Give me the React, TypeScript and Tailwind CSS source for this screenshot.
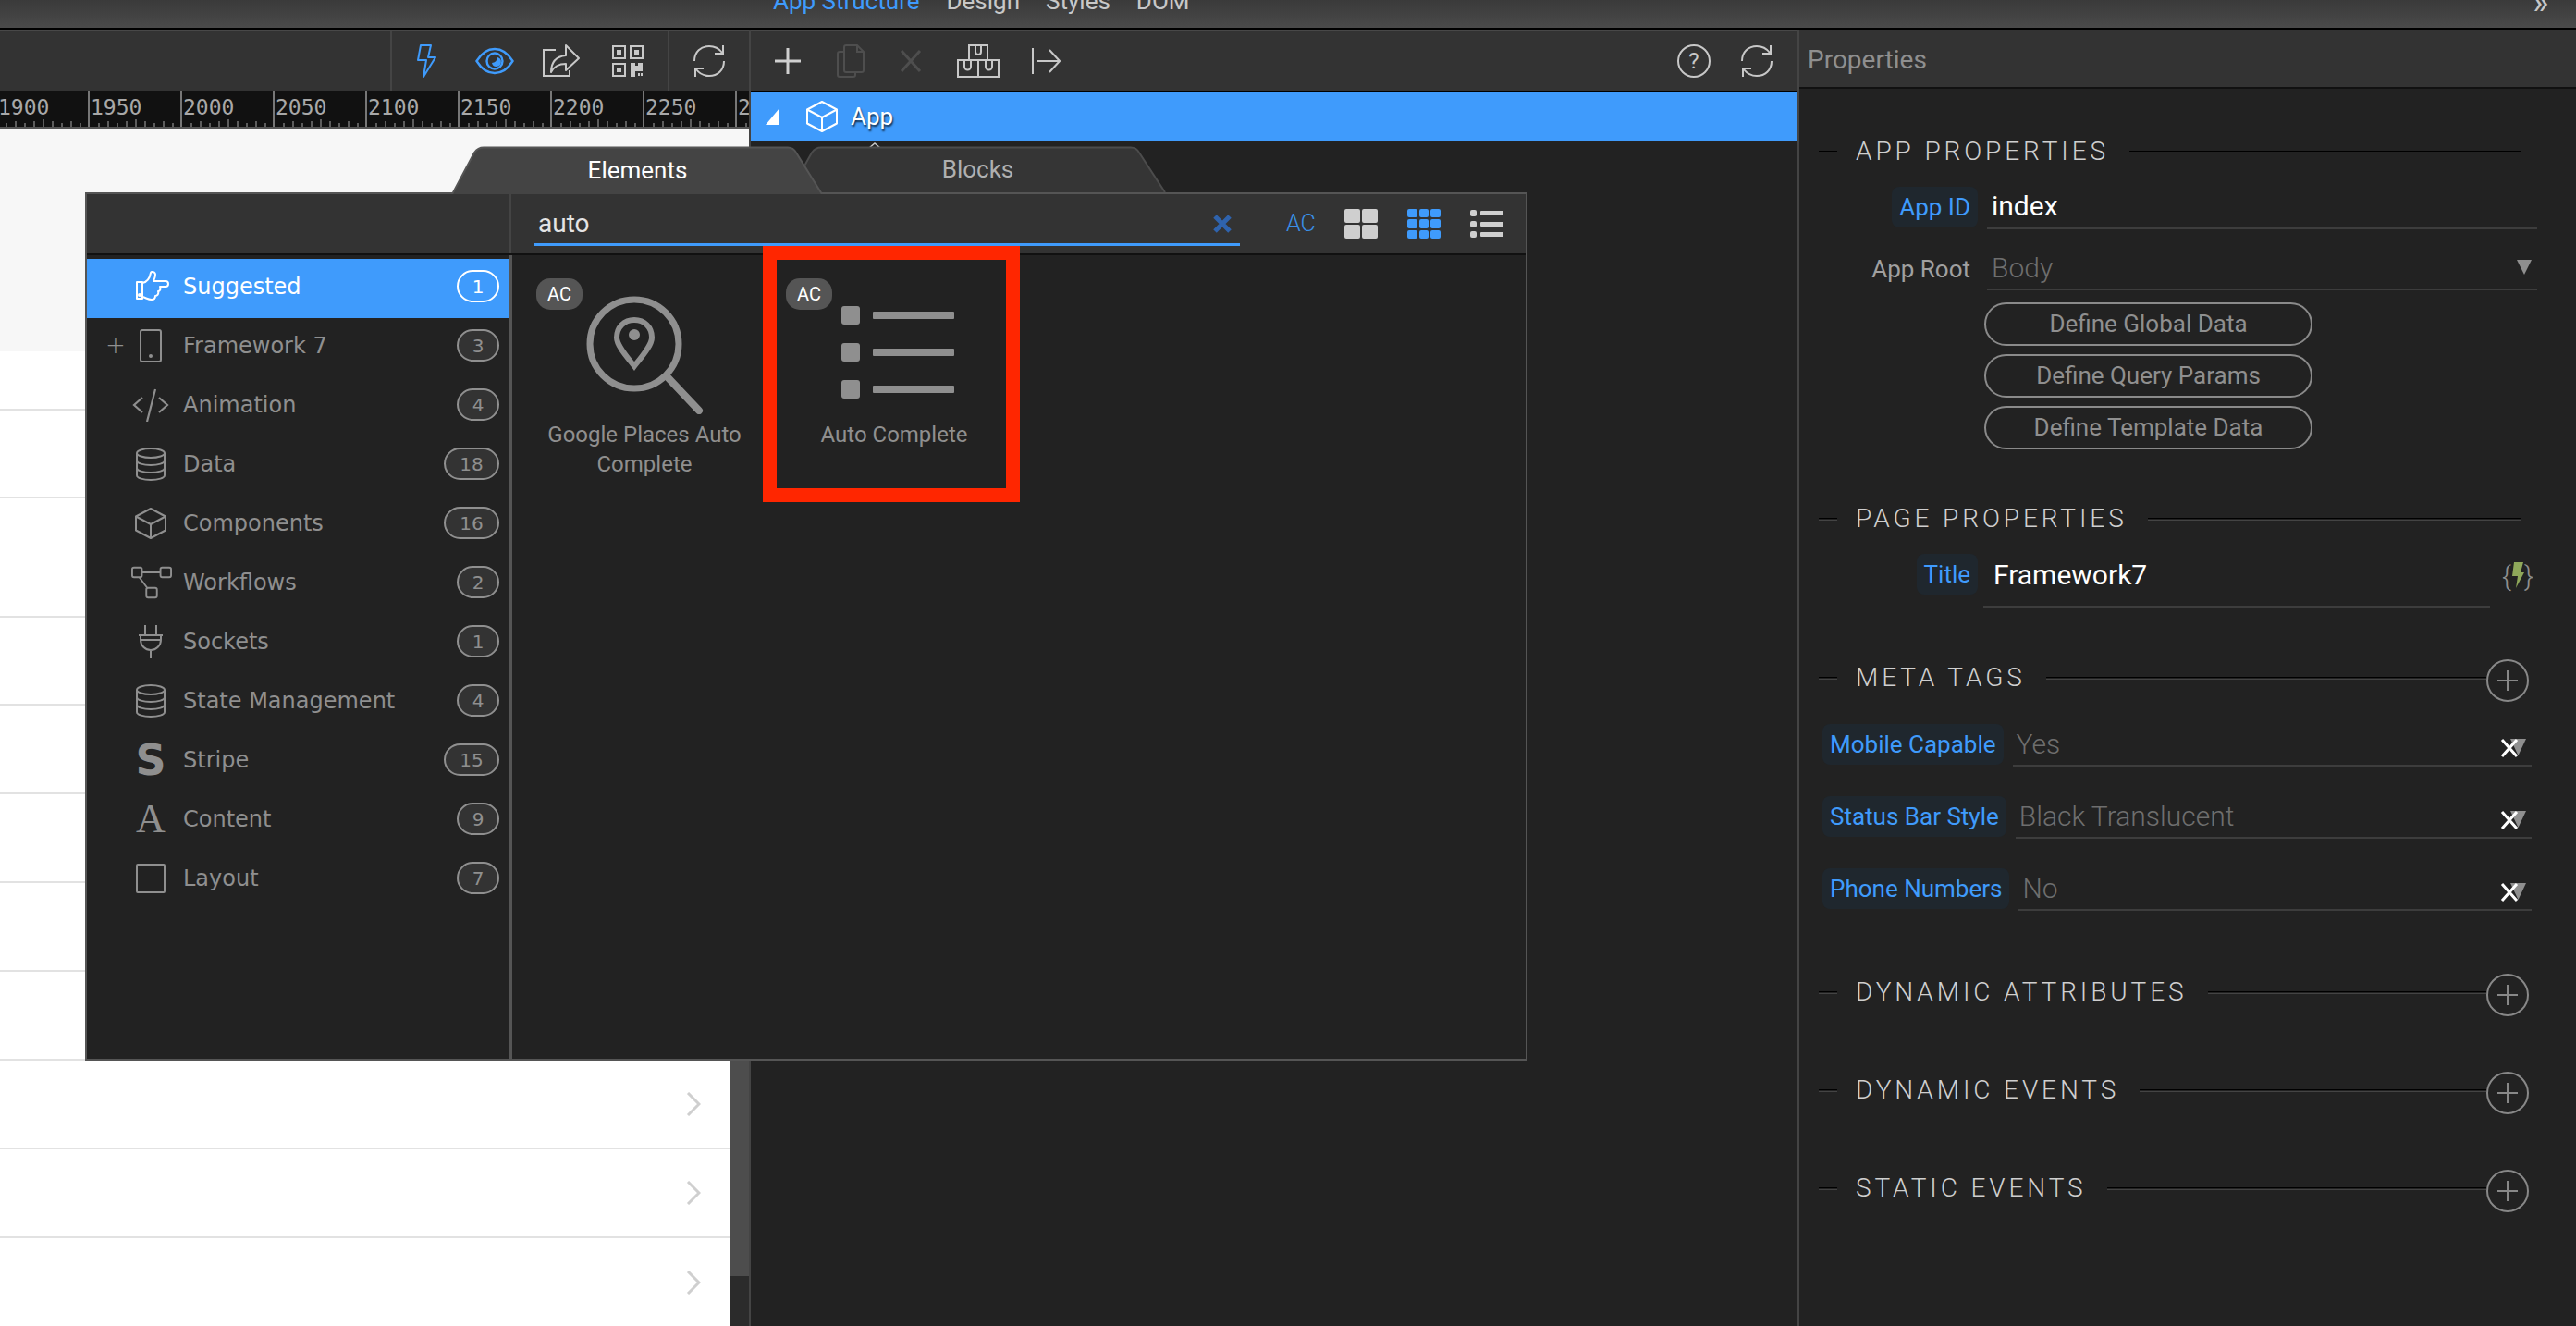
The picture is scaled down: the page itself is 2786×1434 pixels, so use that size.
import React from 'react';

// ---- toolbar icons ----
const Bolt = () => (
  <svg width="26" height="36" viewBox="0 0 26 36" fill="none" stroke="#3f9bfc" strokeWidth="2">
    <path d="M5 1h11l-3 13h8L8 35l3-18H2z" strokeLinejoin="round" />
  </svg>
);
const Eye = () => (
  <svg width="42" height="30" viewBox="0 0 42 30" fill="none" stroke="#3f9bfc" strokeWidth="2.4">
    <path d="M1.500 15C7 6 13 2 21 2s14 4 19.500 13C35 24 29 28 21 28S7 24 1.500 15z" />
    <circle cx="21" cy="15" r="8.500" />
    <path d="M24 11a5 5 0 1 1-6 6a6 6 0 0 0 6-6z" fill="#3f9bfc" stroke="none" />
  </svg>
);
const Share = () => (
  <svg width="42" height="36" viewBox="0 0 42 36" fill="none" stroke="#c8c8c8" strokeWidth="2">
    <path d="M15 6H2v28h28v-6" />
    <path d="M26 1l14 14-14 13v-7c-8 0-13 3-16 9 0-11 6-17 16-18z" strokeLinejoin="round" />
  </svg>
);
const Qr = () => (
  <svg width="34" height="34" viewBox="0 0 34 34" fill="none" stroke="#c8c8c8" strokeWidth="2">
    <rect x="1" y="1" width="13" height="13" />
    <rect x="20" y="1" width="13" height="13" />
    <rect x="1" y="20" width="13" height="13" />
    <g fill="#c8c8c8" stroke="none">
      <rect x="5" y="5" width="5" height="5" />
      <rect x="24" y="5" width="5" height="5" />
      <rect x="5" y="24" width="5" height="5" />
      <path d="M20 19h5v3h3v-3h5v9h-8v6h-5z" />
      <rect x="28" y="30" width="2" height="3" />
      <rect x="31" y="30" width="2" height="3" />
    </g>
  </svg>
);
const Refresh = () => (
  <svg width="38" height="36" viewBox="0 0 38 36" fill="none" stroke="#c8c8c8" strokeWidth="2">
    <path d="M3 18C3 8 10 2 19 2c6 0 11 3 14 7" />
    <path d="M35 18c0 10-7 16-16 16-6 0-11-3-14-7" />
    <path d="M34 1v9H25" />
    <path d="M4 35v-9h9" />
  </svg>
);
const Plus = () => (
  <svg width="28" height="28" viewBox="0 0 28 28" stroke="#d0d0d0" strokeWidth="3">
    <path d="M14 0v28M0 14h28" />
  </svg>
);
const Copy = () => (
  <svg width="30" height="36" viewBox="0 0 30 36" fill="none" stroke="#4e4e4e" strokeWidth="2">
    <path d="M10 1h12l7 7v20a2 2 0 0 1-2 2H10a2 2 0 0 1-2-2V3a2 2 0 0 1 2-2z" />
    <path d="M8 8H3a2 2 0 0 0-2 2v23a2 2 0 0 0 2 2h15a2 2 0 0 0 2-2v-3" />
    <path d="M22 1v7h7" />
  </svg>
);
const CrossDim = () => (
  <svg width="24" height="24" viewBox="0 0 24 24" stroke="#4e4e4e" strokeWidth="3">
    <path d="M2 1l20 22M22 1L2 23" />
  </svg>
);
const Boxes = () => (
  <svg width="46" height="36" viewBox="0 0 46 36" fill="none" stroke="#c8c8c8" strokeWidth="2">
    <rect x="13" y="1" width="20" height="16" />
    <path d="M20 1v7a3 3 0 0 0 6 0V1" />
    <rect x="1" y="17" width="22" height="18" />
    <rect x="23" y="17" width="22" height="18" />
    <path d="M8 17v7a3 3 0 0 0 7 0v-7M31 17v7a3 3 0 0 0 7 0v-7" />
  </svg>
);
const MoveTo = () => (
  <svg width="32" height="28" viewBox="0 0 32 28" fill="none" stroke="#c8c8c8" strokeWidth="2">
    <path d="M2 0v28M6 14h24M20 2l11 12-11 12" />
  </svg>
);
const Help = () => (
  <div className="flex h-[36px] w-[36px] items-center justify-center rounded-full border-2 border-[#c8c8c8] text-[24px] leading-none text-[#c8c8c8]">?</div>
);
const CubeOutline = ({ size = 36, color = 'white', width = 2 }: { size?: number; color?: string; width?: number }) => (
  <svg width={size} height={size} viewBox="0 0 36 36" fill="none" stroke={color} strokeWidth={width} strokeLinejoin="round">
    <path d="M18 2l16 8.500v15L18 34 2 25.500v-15z" />
    <path d="M2 10.500L18 19l16-8.500M18 19v15" />
  </svg>
);

// ---- sidebar icons ----
const gray = '#8f8f8f';
const ThumbIcon = ({ c }: { c: string }) => (
  <svg width="36" height="34" viewBox="0 0 36 34" fill="none" stroke={c} strokeWidth="2" strokeLinejoin="round">
    <path d="M1 12h6v18H1z" />
    <path d="M7 13c5-1 8-5 9-11 1-2 5-1 5 2 0 3-1 5-2 7h13c4 0 4 6 0 6h-6c1 3 0 5-2 5 1 3-1 5-3 5 0 3-2 4-4 4-4 0-6-2-10-3" />
    <circle cx="4" cy="26" r="1" fill={c} />
  </svg>
);
const PhoneIcon = () => (
  <svg width="26" height="36" viewBox="0 0 26 36" fill="none" stroke={gray} strokeWidth="2">
    <rect x="2" y="1" width="22" height="34" rx="2" />
    <circle cx="13" cy="29" r="2" fill={gray} stroke="none" />
  </svg>
);
const CodeIcon = () => (
  <svg width="40" height="36" viewBox="0 0 40 36" fill="none" stroke={gray} strokeWidth="2.2">
    <path d="M11 10L2 18l9 8M29 10l9 8-9 8M25 1l-9 35" />
  </svg>
);
const DbIcon = () => (
  <svg width="32" height="36" viewBox="0 0 32 36" fill="none" stroke={gray} strokeWidth="2">
    <ellipse cx="16" cy="6" rx="15" ry="5" />
    <path d="M1 6v24c0 3 7 5 15 5s15-2 15-5V6" />
    <path d="M1 14c0 3 7 5 15 5s15-2 15-5M1 22c0 3 7 5 15 5s15-2 15-5" />
  </svg>
);
const FlowIcon = () => (
  <svg className="ml-[2px]" width="46" height="36" viewBox="0 0 46 36" fill="none" stroke={gray} strokeWidth="2">
    <rect x="1" y="1" width="11" height="11" rx="2" />
    <rect x="33" y="1" width="12" height="11" rx="2" />
    <rect x="17" y="24" width="12" height="11" rx="2" />
    <path d="M12 6.500h21M9 12l9 12" />
  </svg>
);
const PlugIcon = () => (
  <svg width="28" height="36" viewBox="0 0 28 36" fill="none" stroke={gray} strokeWidth="2">
    <path d="M8 0v10M20 0v10M1 11h26M3 11v5c0 6 5 11 11 11s11-5 11-11v-5M3 16h22M14 27v9" />
  </svg>
);
const SquareIcon = () => <div className="h-[32px] w-[32px] rounded-[2px] border-2 border-[#8f8f8f]" />;

const categories: { name: string; count: number; icon: React.ReactNode; expandable?: boolean }[] = [
  { name: 'Framework 7', count: 3, icon: <PhoneIcon />, expandable: true },
  { name: 'Animation', count: 4, icon: <CodeIcon /> },
  { name: 'Data', count: 18, icon: <DbIcon /> },
  { name: 'Components', count: 16, icon: <CubeOutline color={gray} /> },
  { name: 'Workflows', count: 2, icon: <FlowIcon /> },
  { name: 'Sockets', count: 1, icon: <PlugIcon /> },
  { name: 'State Management', count: 4, icon: <DbIcon /> },
  { name: 'Stripe', count: 15, icon: <span className="font-['DejaVu_Sans'] text-[46px] font-bold leading-none text-[#8f8f8f]">S</span> },
  { name: 'Content', count: 9, icon: <span className="font-['Liberation_Serif'] text-[44px] leading-none text-[#8f8f8f]">A</span> },
  { name: 'Layout', count: 7, icon: <SquareIcon /> },
];

const Ruler = () => {
  const labels = [1900, 1950, 2000, 2050, 2100, 2150, 2200, 2250, 2300];
  return (
    <div className="flex h-[41px] shrink-0 overflow-hidden border-b-2 border-[#555] bg-[#111]">
      <div className="-ml-[5px] flex">
        {labels.map((l) => (
          <div key={l} className="relative h-[39px] w-[100px] shrink-0 overflow-hidden border-l-2 border-[#777] pt-[5px] pl-[1px]">
            <span className="font-['DejaVu_Sans_Mono'] text-[23px] leading-[26px] text-[#a8a8a8]">{l}</span>
            <svg className="absolute bottom-0 left-0" width="100" height="8" stroke="#777" strokeWidth="1.500">
              {[10, 20, 30, 40, 50, 60, 70, 80, 90].map((x) => (
                <line key={x} x1={x} x2={x} y1={x === 50 ? 0 : x % 20 === 0 ? 2 : 4} y2="8" />
              ))}
            </svg>
          </div>
        ))}
      </div>
    </div>
  );
};

const Chevron = () => (
  <svg width="16" height="26" viewBox="0 0 16 26" fill="none" stroke="#cfcfcf" strokeWidth="3">
    <path d="M2 1l12 12L2 25" />
  </svg>
);

// heights of the list rows behind the popup
const canvasRows = [64, 95, 129, 95, 96, 96, 96, 96, 96, 96];

const Canvas = () => (
  <div className="flex min-h-0 flex-1 flex-col overflow-hidden">
    <div className="h-[241px] shrink-0 bg-[#f7f7f7] shadow-[0_2px_6px_rgba(0,0,0,0.25)]" />
    <div className="flex min-h-0 flex-1">
      <div className="min-w-0 flex-1 bg-white">
        {canvasRows.map((h, i) => (
          <div key={i} style={{ height: h }} className="flex items-center justify-end border-b-2 border-[#e2e2e2] pr-[32px]">
            {i >= 7 && <Chevron />}
          </div>
        ))}
        <div className="flex h-[96px] items-center justify-end pr-[32px]"><Chevron /></div>
      </div>
      <div className="flex w-[20px] shrink-0 flex-col bg-[#4d4d4d]">
        <div className="flex-1" />
        <div className="h-[54px] bg-[#2b2b2b]" />
      </div>
    </div>
  </div>
);

const SectionHeader = ({ title, plus, mt }: { title: string; plus?: boolean; mt: string }) => (
  <div className={`flex h-[46px] shrink-0 items-center pl-[21px] ${mt} ${plus ? 'pr-[51px]' : 'pr-[60px]'}`}>
    <div className="h-[3px] w-[20px] border-t-[1.5px] border-b-[1.5px] border-t-black border-b-[#444]" />
    <span className="ml-[20px] mr-[22px] text-[28px] font-light tracking-[3.9px] text-[#cfcfcf]">{title}</span>
    <div className="h-[3px] flex-1 border-t-[1.5px] border-b-[1.5px] border-t-black border-b-[#444]" />
    {plus && (
      <div className="mt-[6px] flex h-[46px] w-[46px] shrink-0 items-center justify-center rounded-full border-2 border-[#888]">
        <svg width="22" height="22" stroke="#888" strokeWidth="2"><path d="M11 0v22M0 11h22" /></svg>
      </div>
    )}
  </div>
);

const MetaRow = ({ label, value, mt }: { label: string; value: string; mt: string }) => (
  <div className={`flex h-[46px] shrink-0 pl-[25px] pr-[48px] ${mt}`}>
    <div className="flex h-[44px] items-center rounded-[8px] bg-[#1f272e] px-[8px] text-[26px] text-[#3f9bfc]">{label}</div>
    <div className="relative ml-[10px] flex flex-1 items-center border-b-2 border-[#3d3d3d] pb-[2px] pl-[4px] text-[30px] font-light text-[#6e6e6e]">
      {value}
      <svg className="absolute right-[6px] top-[16px]" width="17" height="18" viewBox="0 0 17 18"><path d="M0 0h17l-8.500 18z" fill="#8f8f8f" /></svg>
      <svg className="absolute right-[14px] top-[16px]" width="20" height="20" viewBox="0 0 20 20" stroke="white" strokeWidth="3"><path d="M2 1l16 18M18 1L2 19" /></svg>
    </div>
  </div>
);

const Pill = ({ label }: { label: string }) => (
  <div className="flex h-[47px] w-[355px] items-center justify-center rounded-full border-2 border-[#8a8a8a] text-[26px] text-[#8f8f8f]">{label}</div>
);

const PropertiesPanel = () => (
  <div className="flex w-[842px] shrink-0 flex-col border-l-2 border-[#444] bg-[#222] font-['Roboto',sans-serif]">
    <div className="flex h-[64px] shrink-0 items-center border-b-2 border-[#111] bg-[#333] pl-[9px] pt-[3px] text-[28px] text-[#8f8f8f]">Properties</div>
    <SectionHeader title="APP PROPERTIES" mt="mt-[45px]" />
    <div className="mt-[15px] flex h-[46px] shrink-0 pr-[42px]">
      <div className="flex w-[193px] shrink-0 justify-end">
        <div className="flex h-[44px] items-center rounded-[8px] bg-[#1f272e] px-[8px] text-[26px] text-[#3f9bfc]">App ID</div>
      </div>
      <div className="ml-[10px] flex flex-1 items-center border-b-2 border-[#3d3d3d] pb-[3px] pl-[5px] text-[30px] text-white">index</div>
    </div>
    <div className="mt-[20px] flex h-[46px] shrink-0 pr-[42px]">
      <div className="flex w-[185px] shrink-0 items-center justify-end text-[26px] text-[#a0a0a0]">App Root</div>
      <div className="ml-[18px] flex flex-1 items-center justify-between border-b-2 border-[#3d3d3d] pb-[2px] pl-[5px] pr-[6px] text-[30px] font-light text-[#6e6e6e]">
        Body
        <svg width="16" height="16" viewBox="0 0 16 16"><path d="M0 0h16l-8 16z" fill="#8f8f8f" /></svg>
      </div>
    </div>
    <div className="mt-[13px] flex shrink-0 flex-col gap-[9px] pl-[200px]">
      <Pill label="Define Global Data" />
      <Pill label="Define Query Params" />
      <Pill label="Define Template Data" />
    </div>
    <SectionHeader title="PAGE PROPERTIES" mt="mt-[52px]" />
    <div className="mt-[15px] flex h-[58px] shrink-0 pr-[44px]">
      <div className="flex w-[193px] shrink-0 justify-end">
        <div className="flex h-[44px] items-center rounded-[8px] bg-[#1f272e] px-[8px] text-[26px] text-[#3f9bfc]">Title</div>
      </div>
      <div className="ml-[6px] flex flex-1 items-center border-b-2 border-[#3d3d3d] pb-[12px] pl-[11px] text-[30px] text-white">Framework7</div>
      <div className="ml-[11px] flex h-[46px] w-[38px] items-center justify-center text-[30px] font-light text-[#8f8f8f]">
        {'{'}
        <svg width="14" height="28" viewBox="0 0 14 28"><path d="M3 0h10l-3 11h4L5 28l2-13H1z" fill="#8fa85a" /></svg>
        {'}'}
      </div>
    </div>
    <SectionHeader title="META TAGS" plus mt="mt-[53px]" />
    <MetaRow label="Mobile Capable" value="Yes" mt="mt-[27px]" />
    <MetaRow label="Status Bar Style" value="Black Translucent" mt="mt-[32px]" />
    <MetaRow label="Phone Numbers" value="No" mt="mt-[32px]" />
    <SectionHeader title="DYNAMIC ATTRIBUTES" plus mt="mt-[65px]" />
    <SectionHeader title="DYNAMIC EVENTS" plus mt="mt-[60px]" />
    <SectionHeader title="STATIC EVENTS" plus mt="mt-[60px]" />
  </div>
);

const Tab = ({ label, active, width, className }: { label: string; active?: boolean; width: number; className: string }) => {
  const h = active ? 52 : 50;
  return (
    <div className={`absolute flex items-center justify-center text-[26px] ${active ? 'bottom-full h-[52px] text-white' : 'bottom-[calc(100%+2px)] h-[50px] text-[#b0b0b0]'} ${className}`}>
      <svg className="absolute inset-0" width={width} height={h} viewBox={`0 0 ${width} ${h}`}>
        <path
          d={`M0 ${h}L24 7Q28 1.500 34 1.500H${width - 38}Q${width - 32} 1.500 ${width - 29} 7L${width - 1} ${h}`}
          fill={active ? '#444' : '#353535'}
          stroke={active ? '#555' : '#4c4c4c'}
          strokeWidth="2"
        />
      </svg>
      <span className="relative pt-[1px]">{label}</span>
    </div>
  );
};

const SquareGlyph = ({ cls }: { cls: string }) => <div className={`rounded-[2px] ${cls}`} />;

const ElementCard = ({ title, children }: { title: React.ReactNode; children: React.ReactNode }) => (
  <div className="relative flex w-[270px] shrink-0 flex-col items-center">
    <div className="absolute left-[18px] top-[17px] z-10 flex h-[34px] w-[50px] items-center justify-center rounded-[15px] bg-[#555] text-[20px] text-white">AC</div>
    <div className="flex h-[170px] w-full shrink-0 items-start justify-center pt-[34px]">{children}</div>
    <div className="w-[230px] text-center text-[24px] leading-[32px] text-[#8f8f8f]">{title}</div>
  </div>
);

const Popup = () => (
  <div className="absolute left-[92px] top-[208px] flex h-[939px] w-[1560px] flex-col border-2 border-[#555] bg-[#222] font-['Roboto',sans-serif]">
    <Tab label="Elements" active width={401} className="left-[395px] z-10 w-[401px]" />
    <Tab label="Blocks" width={407} className="left-[760px] w-[407px]" />
    <div className="flex h-[66px] shrink-0 border-b-2 border-[#111] bg-[#333]">
      <div className="w-[459px] shrink-0 border-r-2 border-[#444]" />
      <div className="relative mb-[8px] ml-[24px] flex w-[764px] items-center border-b-[3px] border-[#3f9bfc] pl-[5px] pt-[10px] text-[28px] text-[#e4e4e4]">
        auto
        <svg className="absolute right-[9px] top-[22px]" width="20" height="20" viewBox="0 0 20 20" stroke="#2f63ad" strokeWidth="5"><path d="M2 2l16 16M18 2L2 18" /></svg>
      </div>
      <div className="flex flex-1 items-center">
        <span className="ml-[50px] w-[32px] text-[25px] font-light text-[#3a8fe8]">AC</span>
        <div className="ml-[31px] grid h-[32px] w-[36px] grid-cols-2 gap-[2px]">
          {[0, 1, 2, 3].map((i) => <SquareGlyph key={i} cls="bg-[#cfcfcf]" />)}
        </div>
        <div className="ml-[32px] grid h-[32px] w-[36px] grid-cols-3 gap-[2px]">
          {[0, 1, 2, 3, 4, 5, 6, 7, 8].map((i) => <SquareGlyph key={i} cls="bg-[#3f9bfc]" />)}
        </div>
        <div className="ml-[32px] flex h-[30px] w-[36px] flex-col justify-between">
          {[0, 1, 2].map((i) => (
            <div key={i} className="flex items-center gap-[4px]">
              <SquareGlyph cls="h-[7px] w-[7px] bg-[#cfcfcf]" />
              <div className="h-[5px] flex-1 rounded-[1px] bg-[#cfcfcf]" />
            </div>
          ))}
        </div>
      </div>
    </div>
    <div className="flex min-h-0 flex-1">
      <div className="w-[460px] shrink-0 border-r-[4px] border-[#555] pt-[4px] font-['DejaVu_Sans',sans-serif]">
        <div className="flex h-[64px] items-center bg-[#3f9bfc] pb-[5px] pl-[53px] pr-[10px] text-[24px] text-white">
          <div className="flex w-[36px] justify-center"><ThumbIcon c="white" /></div>
          <span className="ml-[15px] flex-1">Suggested</span>
          <div className="flex h-[35px] w-[46px] items-center justify-center rounded-full border-2 border-white text-[20px]">1</div>
        </div>
        {categories.map((c) => (
          <div key={c.name} className="flex h-[64px] items-center pb-[5px] pl-[23px] pr-[10px] text-[24px] text-[#8f8f8f]">
            <span className="-ml-[3px] w-[25px] text-[26px] font-light">{c.expandable ? '+' : ''}</span>
            <div className="ml-[1px] flex w-[46px] justify-center">{c.icon}</div>
            <span className="ml-[12px] flex-1">{c.name}</span>
            <div className={`flex h-[35px] items-center justify-center rounded-full border-2 border-[#8f8f8f] bg-[#333] text-[20px] ${c.count > 9 ? 'w-[60px]' : 'w-[46px]'}`}>{c.count}</div>
          </div>
        ))}
      </div>
      <div className="flex flex-1 items-start pt-[8px] pl-[8px]">
        <ElementCard title="Google Places Auto Complete">
          <svg width="130" height="130" viewBox="0 0 130 130" fill="none" stroke="#8f8f8f" strokeWidth="7">
            <circle cx="54" cy="54" r="48" />
            <path d="M54 28c-11 0-19 8-19 19 0 9 12 22 19 31 7-9 19-22 19-31 0-11-8-19-19-19z" strokeWidth="6" />
            <circle cx="54" cy="44" r="6" fill="#8f8f8f" stroke="none" />
            <path d="M90 90l34 36" strokeWidth="8" strokeLinecap="round" />
          </svg>
        </ElementCard>
        <ElementCard title="Auto Complete">
          <div className="ml-[8px] mt-[13px] flex flex-col gap-[20px]">
            {[0, 1, 2].map((i) => (
              <div key={i} className="flex items-center gap-[14px]">
                <div className="h-[20px] w-[20px] rounded-[3px] bg-[#8f8f8f]" />
                <div className="h-[8px] w-[88px] rounded-[1px] bg-[#8f8f8f]" />
              </div>
            ))}
          </div>
        </ElementCard>
      </div>
    </div>
  </div>
);

export default function App() {
  return (
    <div className="relative h-[1434px] w-[2786px] overflow-hidden bg-[#222] font-['Roboto',sans-serif]">
      {/* top menu, text is cut by the window edge */}
      <div className="h-[32px] overflow-hidden border-b-2 border-black bg-gradient-to-b from-[#3a3a3a] to-[#4a4a4a] text-[26px] leading-[30px] text-[#c8c8c8]">
        <div className="-mt-[14px] flex">
          <span className="ml-[836px] text-[#3f9bfc]">App Structure</span>
          <span className="ml-[29px]">Design</span>
          <span className="ml-[28px]">Styles</span>
          <span className="ml-[28px]">DOM</span>
          <span className="ml-auto mr-[30px] pt-[2px] text-[36px]">»</span>
        </div>
      </div>
      <div className="flex h-[1402px]">
        <div className="flex w-[810px] shrink-0 flex-col">
          <div className="flex h-[66px] shrink-0 border-t-2 border-[#484848] bg-[#333]">
            <div className="w-[424px] shrink-0 border-r-2 border-[#444]" />
            <div className="flex w-[300px] shrink-0 items-center border-r-2 border-[#444] pl-[3px]">
              <div className="flex w-[72px] justify-center"><Bolt /></div>
              <div className="flex w-[72px] justify-center"><Eye /></div>
              <div className="flex w-[72px] justify-center"><Share /></div>
              <div className="flex w-[72px] justify-center"><Qr /></div>
            </div>
            <div className="flex flex-1 items-center justify-center"><Refresh /></div>
          </div>
          <Ruler />
          <Canvas />
        </div>
        <div className="flex min-w-0 flex-1 flex-col border-l-2 border-[#444] bg-[#222]">
          <div className="flex h-[68px] shrink-0 items-center border-t-2 border-b-2 border-t-[#484848] border-b-black bg-[#333] pl-[26px] pr-[25px]">
            <Plus />
            <div className="ml-[39px]"><Copy /></div>
            <div className="ml-[38px]"><CrossDim /></div>
            <div className="ml-[38px]"><Boxes /></div>
            <div className="ml-[34px]"><MoveTo /></div>
            <div className="ml-auto"><Help /></div>
            <div className="ml-[31px]"><Refresh /></div>
          </div>
          <div className="flex h-[52px] shrink-0 items-center bg-[#3f9bfc] pl-[16px]">
            <svg width="16" height="18" viewBox="0 0 16 18"><path d="M15 0v18H0z" fill="white" /></svg>
            <div className="ml-[27px]"><CubeOutline size={36} /></div>
            <span className="ml-[13px] text-[26px] text-white [text-shadow:1px_2px_2px_rgba(0,0,0,0.7)]">App</span>
          </div>
          {/* next tree row peeks out above the popup tabs */}
          <svg className="ml-[126px] mt-[2px]" width="16" height="6" viewBox="0 0 16 6" fill="none" stroke="#c8c8c8" strokeWidth="1.500"><path d="M2 6l6-5 6 5" /></svg>
        </div>
        <PropertiesPanel />
      </div>
      <Popup />
      {/* red annotation around the picked element */}
      <div className="absolute left-[825px] top-[266px] h-[277px] w-[278px] border-[15px] border-[#ff2600]" />
    </div>
  );
}
